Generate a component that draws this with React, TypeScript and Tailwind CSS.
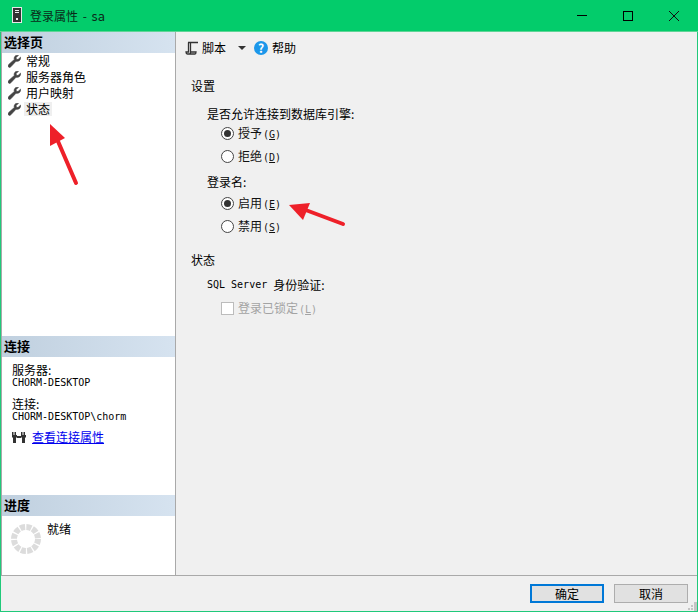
const cjk = "font-['Noto_Sans_CJK_SC','Liberation_Sans',sans-serif]";
const mono = "font-['DejaVu_Sans_Mono','Noto_Sans_CJK_SC',monospace]";

const pages = ["常规", "服务器角色", "用户映射", "状态"];

function Wrench() {
  return (
    <svg width="13" height="13" viewBox="0 0 13 13" className="shrink-0">
      <path
        d="M12.5 2.2 10 4.600 8.400 4.200 8 2.700 10.400.3C8.600-.3 6.400.8 6.200 3c0 .6 0 1 .2 1.400L.7 9.600c-.8.8-.8 1.700-.2 2.300.7.700 1.600.6 2.300-.1l5.200-5.600c.5.1 1 .2 1.500.1 2.200-.3 3.400-2.200 3-4.100Z"
        fill="#444"
        stroke="#444"
        strokeWidth="0.7"
      />
    </svg>
  );
}

function SectionHeader({ text }: { text: string }) {
  return (
    <div className="h-[21px] pl-[2px] pb-[2px] flex items-center bg-gradient-to-r from-[#c0d0df] to-[#d6e3f0] text-[13px] leading-none font-bold text-black">
      {text}
    </div>
  );
}

function Radio({ label, mnemonic, checked }: { label: string; mnemonic: string; checked?: boolean }) {
  return (
    <div className="h-[23px] flex items-center gap-[4px] pl-[45px]">
      <span className="w-[13px] h-[13px] rounded-full border border-[#444] bg-white flex items-center justify-center">
        {checked && <span className="w-[7px] h-[7px] rounded-full bg-[#333]" />}
      </span>
      <span className="text-xs leading-none text-[#111]">
        {label}
        <span className={`${mono} text-[10px] ml-[1px]`}>
          (<span className="underline">{mnemonic}</span>)
        </span>
      </span>
    </div>
  );
}

function Spinner() {
  return (
    <svg width="30" height="30" viewBox="0 0 30 30" className="shrink-0">
      <circle cx="15" cy="15" r="12" fill="none" stroke="#dcdcdc" strokeWidth="6" strokeDasharray="5 1.283" />
    </svg>
  );
}

export default function App() {
  return (
    <div className={`${cjk} relative w-[698px] h-[612px] overflow-hidden bg-[#f0f0f0] flex flex-col text-xs text-black`}>
      {/* Title bar */}
      <div className="h-[32px] shrink-0 bg-[#03cc6b] flex items-center pl-[12px] border-b border-[#5fd596]">
        <svg width="10" height="17" viewBox="0 0 10 17" className="shrink-0">
          <rect x="0.5" y="0.5" width="9" height="15" fill="#333" stroke="#e8e8e8" />
          <rect x="3" y="3" width="4" height="1" fill="#eee" />
          <rect x="3" y="5" width="4" height="1" fill="#eee" />
          <rect x="4" y="11" width="2" height="2" fill="#eee" />
        </svg>
        <span className="ml-[8px] text-xs leading-none text-[#0a2a18] [word-spacing:2px]">
          登录属性 - <span className="text-[13px]">sa</span>
        </span>
        <div className="ml-auto flex items-center pr-px">
          <div className="w-[46px] flex justify-center">
            <div className="w-[10px] h-px bg-black" />
          </div>
          <div className="w-[46px] flex justify-center">
            <div className="w-[10px] h-[10px] border border-black" />
          </div>
          <div className="w-[46px] flex justify-center">
            <svg width="10" height="10" viewBox="0 0 10 10">
              <path d="M0 0 10 10M10 0 0 10" stroke="#111" strokeWidth="1" />
            </svg>
          </div>
        </div>
      </div>

      {/* Body */}
      <div className="flex-1 flex flex-col min-h-0 border-x border-b border-[#20c97a]">
        <div className="flex-1 flex min-h-0 border-b border-[#a9a9a9]">
          {/* Left column */}
          <div className="w-[175px] shrink-0 bg-white border-x border-[#a9a9a9] flex flex-col">
            <div className="h-[304px] shrink-0">
              <SectionHeader text="选择页" />
              <div className="pl-[6px]">
                {pages.map((p) => (
                  <div key={p} className="h-4 flex items-center gap-[3px]">
                    <Wrench />
                    <span className={`leading-none px-[2px] py-px ${p === "状态" ? "bg-[#efefef]" : ""}`}>{p}</span>
                  </div>
                ))}
              </div>
            </div>
            <div className="h-[159px] shrink-0">
              <SectionHeader text="连接" />
              <div className="pl-[10px] pt-[6px]">
                <div className="leading-[13px]">服务器:</div>
                <div className={`${mono} text-[10px] leading-[13px]`}>CHORM-DESKTOP</div>
                <div className="leading-[13px] mt-[8px]">连接:</div>
                <div className={`${mono} text-[10px] leading-[13px]`}>CHORM-DESKTOP\chorm</div>
                <div className="flex items-center gap-[6px] mt-[8px]">
                  <svg width="14" height="12" viewBox="0 0 14 12">
                    <path d="M0 1h1.500v3h1V1H4v3h1v2L4 7v5H1V7L0 6ZM9 1h1.500v3h1V1H13v3h1v2l-1 1v5h-3V7L9 6Z" fill="#333" />
                    <rect x="5" y="5" width="4" height="2" fill="#333" />
                  </svg>
                  <span className="text-[#0000ee] underline leading-none">查看连接属性</span>
                </div>
              </div>
            </div>
            <div className="flex-1">
              <SectionHeader text="进度" />
              <div className="flex pl-[9px] pt-[6px] gap-[6px]">
                <div className="pt-[2px]">
                  <Spinner />
                </div>
                <span className="leading-none pt-[1px]">就绪</span>
              </div>
            </div>
          </div>

          {/* Right column */}
          <div className="flex-1 bg-[#f0f0f0]">
            <div className="h-[33px] pb-[2px] flex items-center pl-[9px] text-xs">
              <svg width="14" height="14" viewBox="0 0 14 14">
                <path d="M4 13c1 0 1.500-.6 1.500-1.500V1.500H13M3 1.500h10M3.500 1.500v9.500H1c0 1 .6 2 1.500 2H10c1 0 1-1 1-2H5.500" fill="none" stroke="#333" strokeWidth="1.300" />
              </svg>
              <span className="ml-[3px] leading-none">脚本</span>
              <span className="ml-[12px] w-0 h-0 border-x-[4px] border-x-transparent border-t-[4px] border-t-[#333]" />
              <span className="ml-[8px] w-[14px] h-[14px] rounded-full bg-[#1c97ea] text-white text-[12px] font-bold leading-none flex items-center justify-center">?</span>
              <span className="ml-[4px] leading-none">帮助</span>
            </div>
            <div className="pl-[15px] pt-[15px] h-[17px] box-content leading-none">设置</div>
            <div className="pl-[31px] mt-[8px] h-[17px] flex items-center leading-none">是否允许连接到数据库引擎:</div>
            <Radio label="授予" mnemonic="G" checked />
            <Radio label="拒绝" mnemonic="D" />
            <div className="pl-[31px] mt-[3px] h-[21px] flex items-center leading-none">登录名:</div>
            <Radio label="启用" mnemonic="E" checked />
            <Radio label="禁用" mnemonic="S" />
            <div className="pl-[15px] mt-[13px] h-[17px] flex items-center leading-none">状态</div>
            <div className="pl-[31px] mt-[8px] h-[17px] flex items-center leading-none">
              <span className={`${mono} text-[10px]`}>SQL Server</span>
              <span className="ml-[6px]">身份验证:</span>
            </div>
            <div className="flex items-center gap-[4px] pl-[45px] mt-[7px] h-[17px]">
              <span className="w-[13px] h-[13px] bg-white border border-[#bcbcbc]" />
              <span className="leading-none text-[#a3a3a3]">
                登录已锁定
                <span className={`${mono} text-[10px] ml-[1px]`}>
                  (<span className="underline">L</span>)
                </span>
              </span>
            </div>
          </div>
        </div>

        {/* Footer */}
        <div className="h-[35px] shrink-0 relative flex items-center justify-end pr-[9px] gap-[10px] bg-[#f0f0f0]">
          <button className="w-[74px] h-[19px] border-2 border-[#0078d7] bg-[#e1e1e1] text-xs leading-none flex items-center justify-center">确定</button>
          <button className="w-[74px] h-[19px] border border-[#adadad] bg-[#e1e1e1] text-xs leading-none flex items-center justify-center">取消</button>
          <svg width="9" height="9" viewBox="0 0 9 9" className="absolute right-0 bottom-0">
            <path d="M6 0h3v3H6ZM3 3h2v2H3ZM6 3h3v3H6ZM0 6h2v2H0ZM3 6h2v2H3ZM6 6h3v3H6Z" fill="#c4c4c4" />
          </svg>
        </div>
      </div>

      {/* Red annotation arrows */}
      <svg width="698" height="612" className="absolute inset-0 pointer-events-none">
        <path d="M76 183 57 139" stroke="#ee2029" strokeWidth="4" strokeLinecap="round" />
        <path d="M50 124 65 138 50 146Z" fill="#ee2029" />
        <path d="M343 224 303 209" stroke="#ee2029" strokeWidth="4" strokeLinecap="round" />
        <path d="M289 205 310 203 303 220Z" fill="#ee2029" />
      </svg>
    </div>
  );
}
